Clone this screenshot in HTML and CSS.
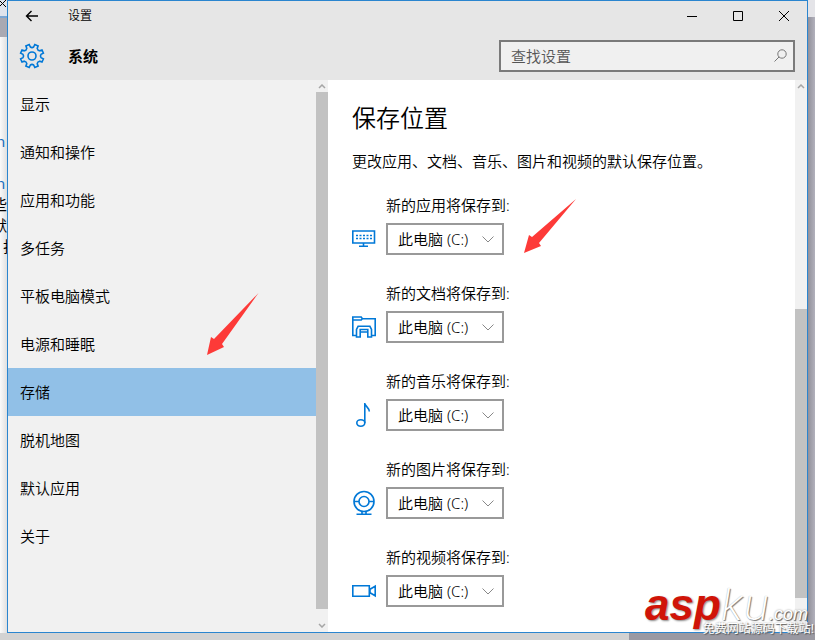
FILE: index.html
```
<!DOCTYPE html>
<html lang="zh-CN">
<head>
  <meta charset="UTF-8">
  <meta name="viewport" content="width=device-width, initial-scale=1">
  <title>设置</title>
  <link rel="stylesheet" href="styles.css">
</head>

<body>

  <!-- Page behind the window -->
  <div class="backdrop" aria-hidden="true">
    <div class="backdrop-tab">
      <svg width="6" height="8" viewBox="0 0 6 8"><path d="M-1 0l7 7M6 0l-7 7" /></svg>
    </div>
    <div class="backdrop-bar"></div>
    <div class="backdrop-page">
      <p class="link">n</p>
      <p class="link">n</p>
      <p>些</p>
      <p>默</p>
      <p class="indent">打</p>
    </div>
  </div>

  <!-- Settings window -->
  <div class="window">
    <div class="titlebar">
      <button class="back" aria-label="返回">
        <svg width="14" height="12" viewBox="0 0 14 12"><path d="M13 6H1.5M6.5 1l-5 5 5 5" /></svg>
      </button>
      <span class="titlebar-text">设置</span>
      <div class="window-controls">
        <button aria-label="最小化">
          <svg width="10" height="10" viewBox="0 0 10 10"><path d="M0 5.5h10" /></svg>
        </button>
        <button aria-label="最大化">
          <svg width="10" height="10" viewBox="0 0 10 10"><path d="M.5.5h9v9h-9z" /></svg>
        </button>
        <button aria-label="关闭">
          <svg width="10" height="10" viewBox="0 0 10 10"><path d="M0 0l10 10M10 0L0 10" /></svg>
        </button>
      </div>
    </div>

    <div class="header">
      <svg class="gear" width="26" height="26" viewBox="-13 -13 26 26">
        <path d="M1.6-9L2.8-11.4 6.1-10 5.2-7.6Q5.6-5.6 7.6-5.2L10-6.1 11.4-2.8 9-1.6Q7.8 0 9 1.6L11.4 2.8 10 6.1 7.6 5.2Q5.6 5.6 5.2 7.6L6.1 10 2.8 11.4 1.6 9Q0 7.8-1.6 9L-2.8 11.4-6.1 10-5.2 7.6Q-5.6 5.6-7.6 5.2L-10 6.1-11.4 2.8-9 1.6Q-7.8 0-9-1.6L-11.4-2.8-10-6.1-7.6-5.2Q-5.6-5.6-5.2-7.6L-6.1-10-2.8-11.4-1.6-9Q0-7.8 1.6-9z" />
        <circle r="4" />
      </svg>
      <h1>系统</h1>
      <div class="search">
        <input type="text" placeholder="查找设置" aria-label="查找设置">
        <svg width="13" height="13" viewBox="0 0 13 13"><circle cx="8" cy="5" r="4.2" /><path d="M5 8L.5 12.5" /></svg>
      </div>
    </div>

    <div class="panes">
      <!-- Sidebar -->
      <nav class="sidebar">
        <a href="#">显示</a>
        <a href="#">通知和操作</a>
        <a href="#">应用和功能</a>
        <a href="#">多任务</a>
        <a href="#">平板电脑模式</a>
        <a href="#">电源和睡眠</a>
        <a href="#" class="active">存储</a>
        <a href="#">脱机地图</a>
        <a href="#">默认应用</a>
        <a href="#">关于</a>
      </nav>
      <div class="scrollbar scrollbar-side">
        <svg width="8" height="5" viewBox="0 0 8 5"><path d="M1 4l3-3 3 3" /></svg>
        <div class="thumb"></div>
        <svg width="8" height="5" viewBox="0 0 8 5"><path d="M1 1l3 3 3-3" /></svg>
      </div>

      <!-- Content -->
      <main class="content">
        <h2>保存位置</h2>
        <p class="intro">更改应用、文档、音乐、图片和视频的默认保存位置。</p>

        <div class="location">
          <label for="apps">新的应用将保存到:</label>
          <svg width="24" height="24" viewBox="0 0 24 24">
            <path d="M.8 4h21.7v12H.8zM11.5 16v3M7 19.2h9" />
            <path class="dots" d="M4 8.5h16M4 11.5h16" />
          </svg>
          <div class="select">
            <select id="apps"><option>此电脑 (C:)</option></select>
            <svg width="12" height="7" viewBox="0 0 12 7"><path d="M.5.5L6 6 11.5.5" /></svg>
          </div>
        </div>

        <div class="location">
          <label for="docs">新的文档将保存到:</label>
          <svg width="24" height="24" viewBox="0 0 24 24">
            <path d="M4 20.5H.8V2h8.4l1.2 1.7h12.8v16.8H20M.8 5h8.4l1.2-1.3M4.5 22v-7.5l1.6-3.2h11.8l1.6 3.2V22h-3.7v-5H8.2v5zM8.2 17v-2.5h7.6V17" />
          </svg>
          <div class="select">
            <select id="docs"><option>此电脑 (C:)</option></select>
            <svg width="12" height="7" viewBox="0 0 12 7"><path d="M.5.5L6 6 11.5.5" /></svg>
          </div>
        </div>

        <div class="location">
          <label for="music">新的音乐将保存到:</label>
          <svg width="24" height="24" viewBox="0 0 24 24">
            <ellipse cx="8.8" cy="20" rx="4" ry="3.2" />
            <path d="M12.8 20V0c.3 3.7 4.4 4.2 4.5 8.5" />
          </svg>
          <div class="select">
            <select id="music"><option>此电脑 (C:)</option></select>
            <svg width="12" height="7" viewBox="0 0 12 7"><path d="M.5.5L6 6 11.5.5" /></svg>
          </div>
        </div>

        <div class="location">
          <label for="pictures">新的图片将保存到:</label>
          <svg width="24" height="24" viewBox="0 0 24 24">
            <circle cx="12" cy="10.5" r="10" />
            <circle cx="12" cy="10.5" r="5" />
            <path d="M2 10.5h5M17 10.5h5M10 20.5v2.5M14 20.5v2.5M4.5 23.2h15" />
          </svg>
          <div class="select">
            <select id="pictures"><option>此电脑 (C:)</option></select>
            <svg width="12" height="7" viewBox="0 0 12 7"><path d="M.5.5L6 6 11.5.5" /></svg>
          </div>
        </div>

        <div class="location">
          <label for="videos">新的视频将保存到:</label>
          <svg width="24" height="24" viewBox="0 0 24 24">
            <path d="M.8 6.8h16.5v10.4H.8zM18 10.2l5.2-3v9.6l-5.2-3z" />
          </svg>
          <div class="select">
            <select id="videos"><option>此电脑 (C:)</option></select>
            <svg width="12" height="7" viewBox="0 0 12 7"><path d="M.5.5L6 6 11.5.5" /></svg>
          </div>
        </div>
      </main>
      <div class="scrollbar scrollbar-main">
        <svg width="8" height="5" viewBox="0 0 8 5"><path d="M1 4l3-3 3 3" /></svg>
        <div class="thumb"></div>
      </div>
    </div>
  </div>

  <!-- Red pointer arrows -->
  <svg class="arrow arrow-side" width="52" height="62" viewBox="0 0 52 62"><path d="M0 62L4 44l3 2L51.5 0 15 51l2 3z" /></svg>
  <svg class="arrow arrow-main" width="52" height="54" viewBox="0 0 52 54"><path d="M0 54L5 36l3 2L52 0 15 44l2 3z" /></svg>

  <!-- Watermark -->
  <div class="watermark">
    <div class="watermark-logo"><b>asp</b><i>ku</i><small>.com</small></div>
    <div class="watermark-text">免费网站源码下载站!</div>
  </div>

</body>
</html>
```
FILE: styles.css
```
* {
  box-sizing: border-box;
}

body {
  margin: 0;
  height: 100vh;
  padding: 0 7px 7px;
  overflow: hidden;
  position: relative;
  display: flex;
  font-family: "Noto Sans", "Noto Sans CJK SC", sans-serif;
  font-size: 15px;
  font-weight: 350;
  line-height: 24px;
  color: #000;
  background: linear-gradient(90deg, #d2d2d2 629px, #9a99a2 629px);
}

svg {
  display: block;
  fill: none;
  stroke: #000;
}

button {
  display: flex;
  align-items: center;
  justify-content: center;
  padding: 0;
  border: none;
  background: none;
}

/* Backdrop */
.backdrop {
  position: absolute;
  inset: 0 0 7px;
  overflow: hidden;
  background:
    linear-gradient(#e4e4e8, #e4e4e8) right top / 8px 17px no-repeat,
    linear-gradient(90deg, transparent calc(100% - 8px), #92919b calc(100% - 7px), #b2b1bc 100%);
}

.backdrop-tab {
  width: 8px;
  height: 18px;
  border-bottom: 2px solid #7ba6d4;
  background: #dfe3ec;
}

.backdrop-bar {
  width: 8px;
  height: 19px;
  background: #a9a9b2;
}

.backdrop-page {
  width: 8px;
  height: 100%;
  padding-top: 94px;
  overflow: hidden;
  background: linear-gradient(90deg, #fafafa, #dcdcdc);
  font-weight: 400;
  line-height: 21px;
}

.backdrop-page p {
  margin: 0 0 0 -8px;
}

.backdrop-page .link {
  margin: 0 0 21px -4px;
  color: #1a6fc0;
}

.backdrop-page .link + .link {
  margin-bottom: 0;
}

.backdrop-page .indent {
  margin-left: 3px;
}

/* Window */
.window {
  position: relative;
  flex: 1;
  min-width: 0;
  display: flex;
  flex-direction: column;
  border: 1px solid #2a85cf;
  background: #e6e6e6;
}

.titlebar {
  display: flex;
  align-items: center;
  height: 30px;
}

.back {
  width: 48px;
  height: 30px;
}

.back svg {
  stroke-width: 1.4;
}

.titlebar-text {
  margin-left: 12px;
  font-size: 12px;
}

.window-controls {
  display: flex;
  margin-left: auto;
}

.window-controls button {
  width: 46px;
  height: 30px;
}

/* Header */
.header {
  display: flex;
  align-items: center;
  gap: 23px;
  height: 49px;
  padding: 0 12px 0 11px;
}

.gear {
  stroke: #0078d7;
  stroke-width: 1.6;
}

.header h1 {
  margin: 0;
  font-size: 15px;
}

.search {
  display: flex;
  align-items: center;
  width: 296px;
  height: 32px;
  margin-left: auto;
  padding: 0 6px 0 10px;
  border: 2px solid #7a7a7a;
  background: #f0f0f0;
}

.search input {
  flex: 1;
  min-width: 0;
  padding: 0;
  border: none;
  background: none;
  font: inherit;
  outline: none;
}

.search input::placeholder {
  color: #555;
}

.search svg {
  stroke: #777;
}

/* Panes */
.panes {
  flex: 1;
  min-height: 0;
  display: flex;
}

.sidebar {
  width: 308px;
  background: #f1f1f1;
}

.sidebar a {
  display: block;
  padding: 12px;
  color: #000;
  text-decoration: none;
}

.sidebar .active {
  background: #91c0e7;
}

.scrollbar {
  display: flex;
  flex-direction: column;
  align-items: center;
  width: 12px;
  padding: 4px 0;
  background: #f1f1f1;
}

.scrollbar svg {
  stroke: #a6a6a6;
  stroke-width: 1.5;
}

.thumb {
  width: 12px;
  background: #c2c2c2;
}

.scrollbar-side .thumb {
  flex: 1;
  margin: 3px 0 14px;
}

.scrollbar-main .thumb {
  height: 289px;
  margin: auto 0 30px;
}

/* Content */
.content {
  flex: 1;
  min-width: 0;
  display: flex;
  flex-direction: column;
  padding: 22px 24px 0;
  background: #fff;
}

.content h2 {
  margin: 0;
  font-size: 24px;
  font-weight: 350;
  line-height: 32px;
}

.intro {
  margin: 15px 0 20px;
}

.location {
  display: grid;
  grid-template-columns: 24px 118px;
  align-items: center;
  gap: 6px 10px;
  margin-bottom: 26px;
}

.location label {
  grid-column: 2;
  white-space: nowrap;
}

.location > svg {
  overflow: visible;
  stroke: #0078d7;
  stroke-width: 1.6;
}

.location .dots {
  stroke-width: 1.5;
  stroke-dasharray: 2 1.5;
}

.select {
  display: grid;
  align-items: center;
}

.select select,
.select svg {
  grid-area: 1 / 1;
}

.select select {
  width: 100%;
  height: 32px;
  padding: 0 10px;
  border: 2px solid #999;
  border-radius: 0;
  background: #fff;
  color: #000;
  font: inherit;
  appearance: none;
}

.select svg {
  justify-self: end;
  margin-right: 10px;
  stroke: #888;
  pointer-events: none;
}

/* Arrows */
.arrow {
  position: absolute;
  fill: #fd3a38;
  stroke: none;
}

.arrow-side {
  left: 207px;
  top: 293px;
}

.arrow-main {
  left: 524px;
  top: 199px;
}

/* Watermark */
.watermark {
  position: absolute;
  right: 1px;
  bottom: 4px;
  width: 169px;
  font-family: "Liberation Sans", "Noto Sans CJK SC", sans-serif;
  font-weight: 400;
  color: #fff;
  text-shadow: 1px 1px 1px #555, 0 0 2px #999;
  white-space: nowrap;
}

.watermark-logo {
  height: 36px;
  font-size: 44px;
  font-style: italic;
  line-height: 36px;
}

.watermark-logo b {
  color: #d01408;
  text-shadow: 1px 1px 2px #888;
}

.watermark-logo i {
  font-family: Inter, sans-serif;
  font-weight: 200;
  text-shadow: 1px 1px 1px #777, 0 0 1px #aaa;
}

.watermark-logo small {
  font-size: 18px;
}

.watermark-text {
  font-size: 12px;
  line-height: 14px;
  text-align: right;
}
```
